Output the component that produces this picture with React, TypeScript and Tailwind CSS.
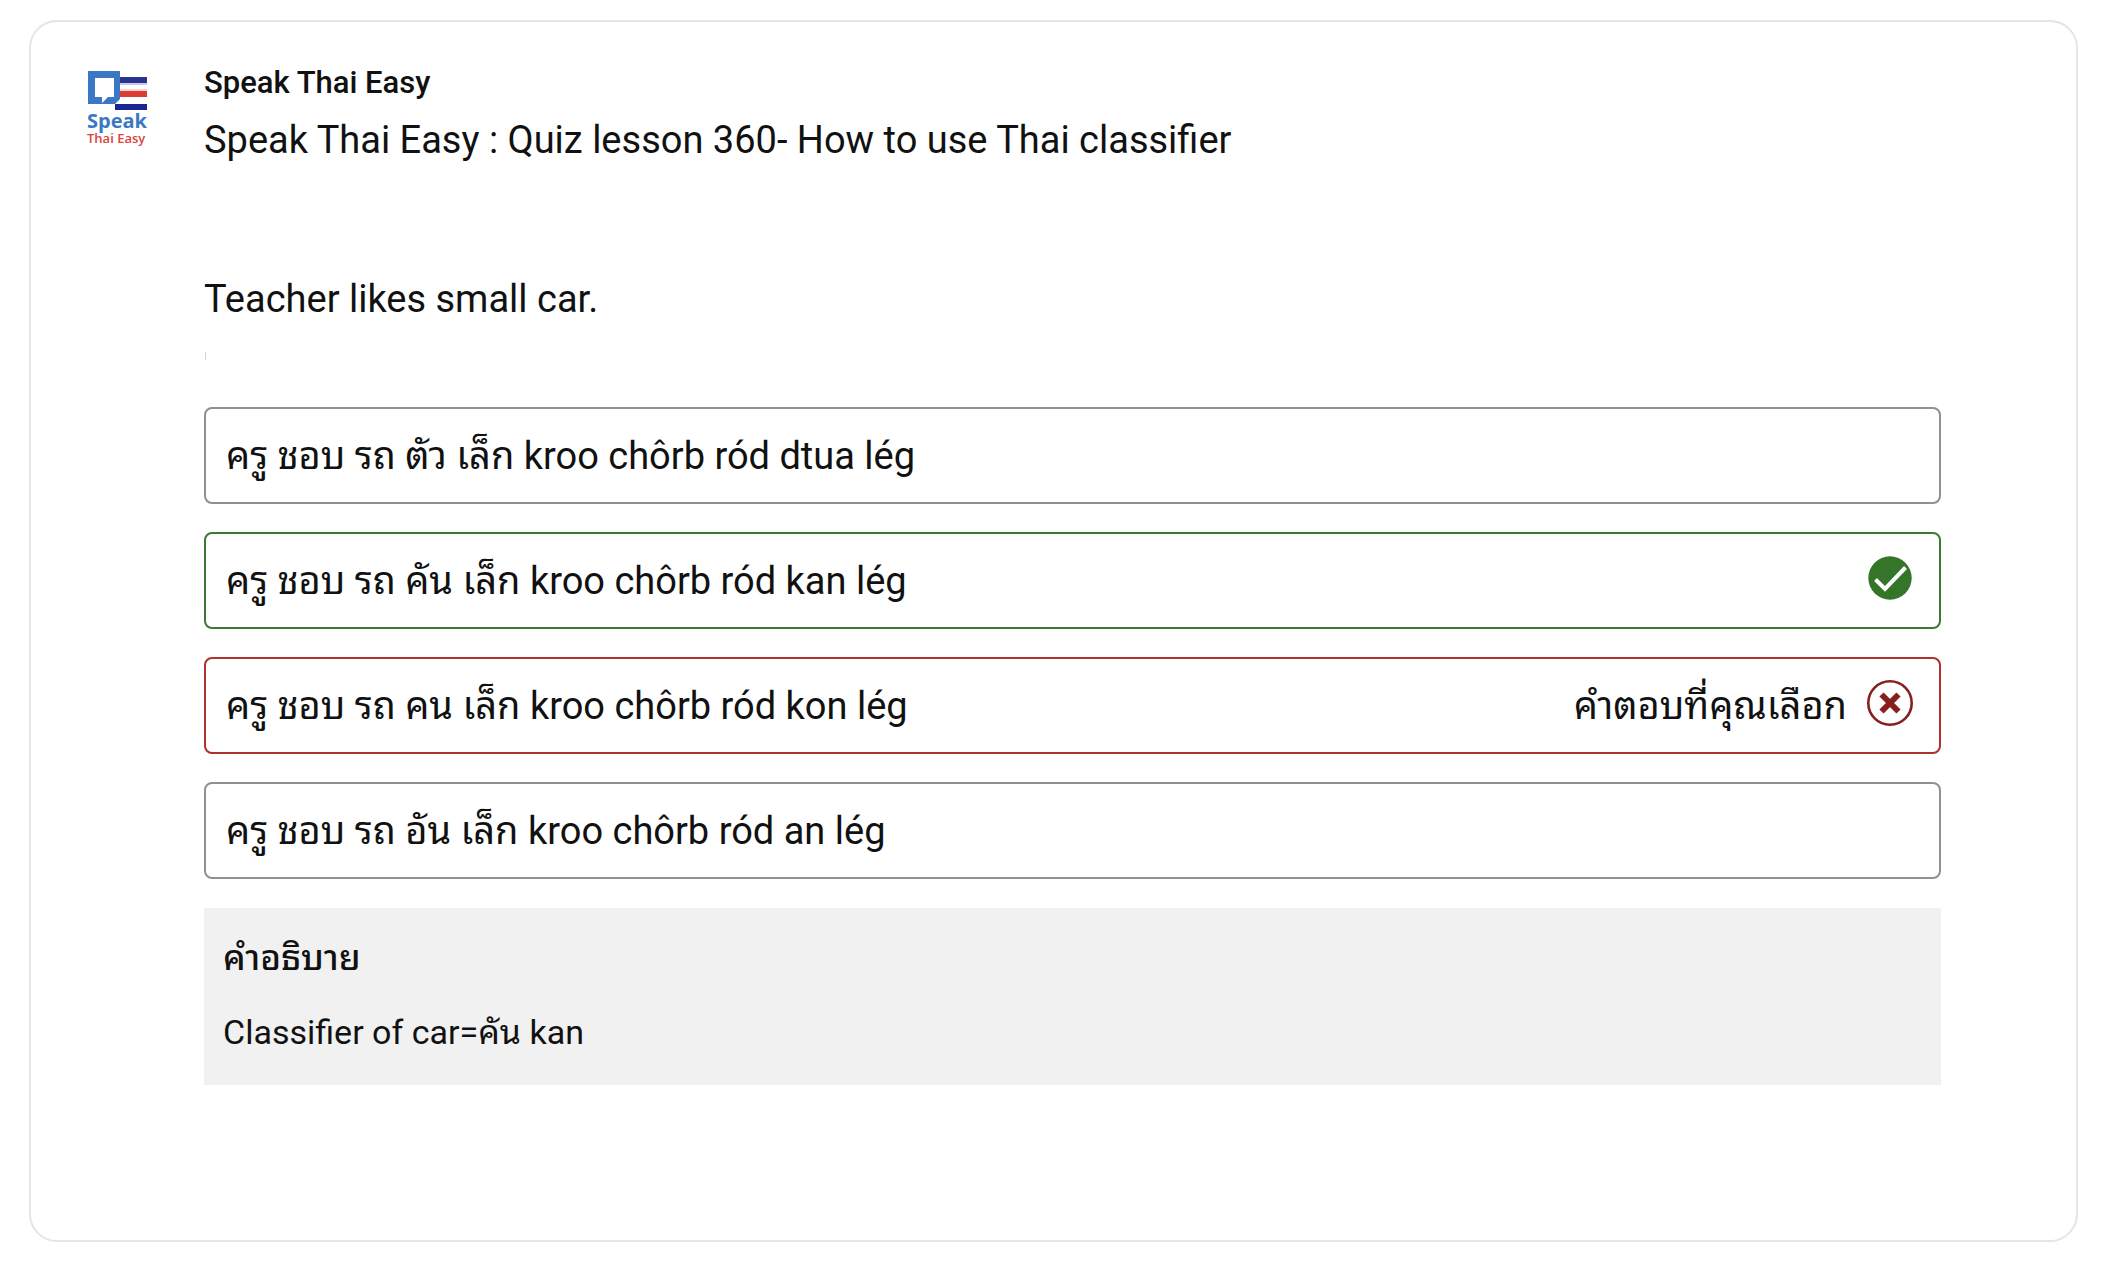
// src/App.tsx
type Option = {
  text: string;
  status?: "correct" | "wrong";
};

const OPTIONS: Option[] = [
  { text: "ครู ชอบ รถ ตัว เล็ก kroo chôrb ród dtua lég" },
  { text: "ครู ชอบ รถ คัน เล็ก kroo chôrb ród kan lég", status: "correct" },
  { text: "ครู ชอบ รถ คน เล็ก kroo chôrb ród kon lég", status: "wrong" },
  { text: "ครู ชอบ รถ อัน เล็ก kroo chôrb ród an lég" },
];

function Logo() {
  return (
    <svg
      viewBox="0 0 64 80"
      className="w-16 h-20 shrink-0"
      role="img"
      aria-label="Speak Thai Easy"
    >
      {/* flag stripes */}
      <path d="M34 7h27v6H34z" fill="#2a3590" />
      <path d="M34 13h27v2H34z" fill="#c9c6e6" />
      <path d="M34 19h27v2H34z" fill="#f6d3cf" />
      <path d="M34 21h27v6H34z" fill="#dc3b36" />
      <path d="M29 34h32v6H29z" fill="#1c2590" />
      {/* speech bubble */}
      <path
        fillRule="evenodd"
        fill="#3b78c4"
        d="M2 1h32v28l-5 5H2zM9 8v19h7v6l6-6h6V8z"
      />
      <text
        x="1"
        y="58"
        className="font-['Open_Sans',sans-serif] text-[20px] font-bold"
        fill="#3b78c4"
      >
        Speak
      </text>
      <text
        x="1"
        y="73"
        className="font-['Open_Sans',sans-serif] text-[13px] font-semibold"
        fill="#d9443f"
      >
        Thai Easy
      </text>
    </svg>
  );
}

function CorrectIcon() {
  return (
    <svg viewBox="0 0 46 46" className="size-[46px]" role="img" aria-label="ถูกต้อง">
      <circle cx="23" cy="23" r="21.7" fill="#34752a" />
      <path d="M8.5 24.5l9.5 9.5L38.5 12.5" fill="none" stroke="#fff" strokeWidth="4" />
    </svg>
  );
}

function WrongIcon() {
  return (
    <svg viewBox="0 0 46 46" className="size-[46px]" role="img" aria-label="ไม่ถูกต้อง">
      <circle cx="23" cy="23" r="21.7" fill="none" stroke="#86201f" strokeWidth="2.6" />
      <path d="M14.5 14.5l17 17M31.5 14.5l-17 17" stroke="#86201f" strokeWidth="6" />
    </svg>
  );
}

function OptionRow({ text, status }: Option) {
  const border =
    status === "correct"
      ? "border-[#3c7a33]"
      : status === "wrong"
        ? "border-[#b0302a]"
        : "border-[#909090]";

  return (
    <li
      className={`flex items-center justify-between min-h-[97px] border-2 rounded-lg pl-5 pr-[26px] ${border}`}
    >
      <span>{text}</span>
      {status && (
        <div className="flex items-center gap-5">
          {status === "wrong" && <span>คำตอบที่คุณเลือก</span>}
          <div className="pb-[5px]">
            {status === "correct" ? <CorrectIcon /> : <WrongIcon />}
          </div>
        </div>
      )}
    </li>
  );
}

export default function App() {
  return (
    <div className="min-h-screen bg-white pt-5 pl-[29px] pr-12 pb-[38px] font-[Roboto,'Noto_Sans_Thai_Looped',Loma,Waree,'Noto_Sans_Thai',sans-serif] text-[38px] leading-[48px] text-[#111]">
      <article className="border-2 border-[#e5e5e5] rounded-[28px] pt-10 pb-[155px]">
        {/* ── quiz header ── */}
        <header className="flex items-start pl-[55px] pr-[135px]">
          <div className="pt-2 pr-[54px]">
            <Logo />
          </div>
          <div className="pt-px">
            <p className="text-[31px] leading-10 font-medium">Speak Thai Easy</p>
            <h1 className="mt-[13px]">
              Speak Thai Easy : Quiz lesson 360- How to use Thai classifier
            </h1>
          </div>
        </header>

        {/* ── question and answers ── */}
        <section className="pl-[173px] pr-[135px] pt-[111px]">
          <h2>Teacher likes small car.</h2>
          <div className="mt-[29px] ml-px w-px h-2 bg-gray-300" />

          <ul className="mt-[47px] space-y-7">
            {OPTIONS.map((o) => (
              <OptionRow key={o.text} {...o} />
            ))}
          </ul>

          <div className="mt-[29px] bg-[#f1f1f1] px-[19px] pt-[31px] pb-[33px] leading-10">
            <h3 className="text-[35px] font-medium">คำอธิบาย</h3>
            <p className="mt-[33px] text-[34px]">Classifier of car=คัน kan</p>
          </div>
        </section>
      </article>
    </div>
  );
}
